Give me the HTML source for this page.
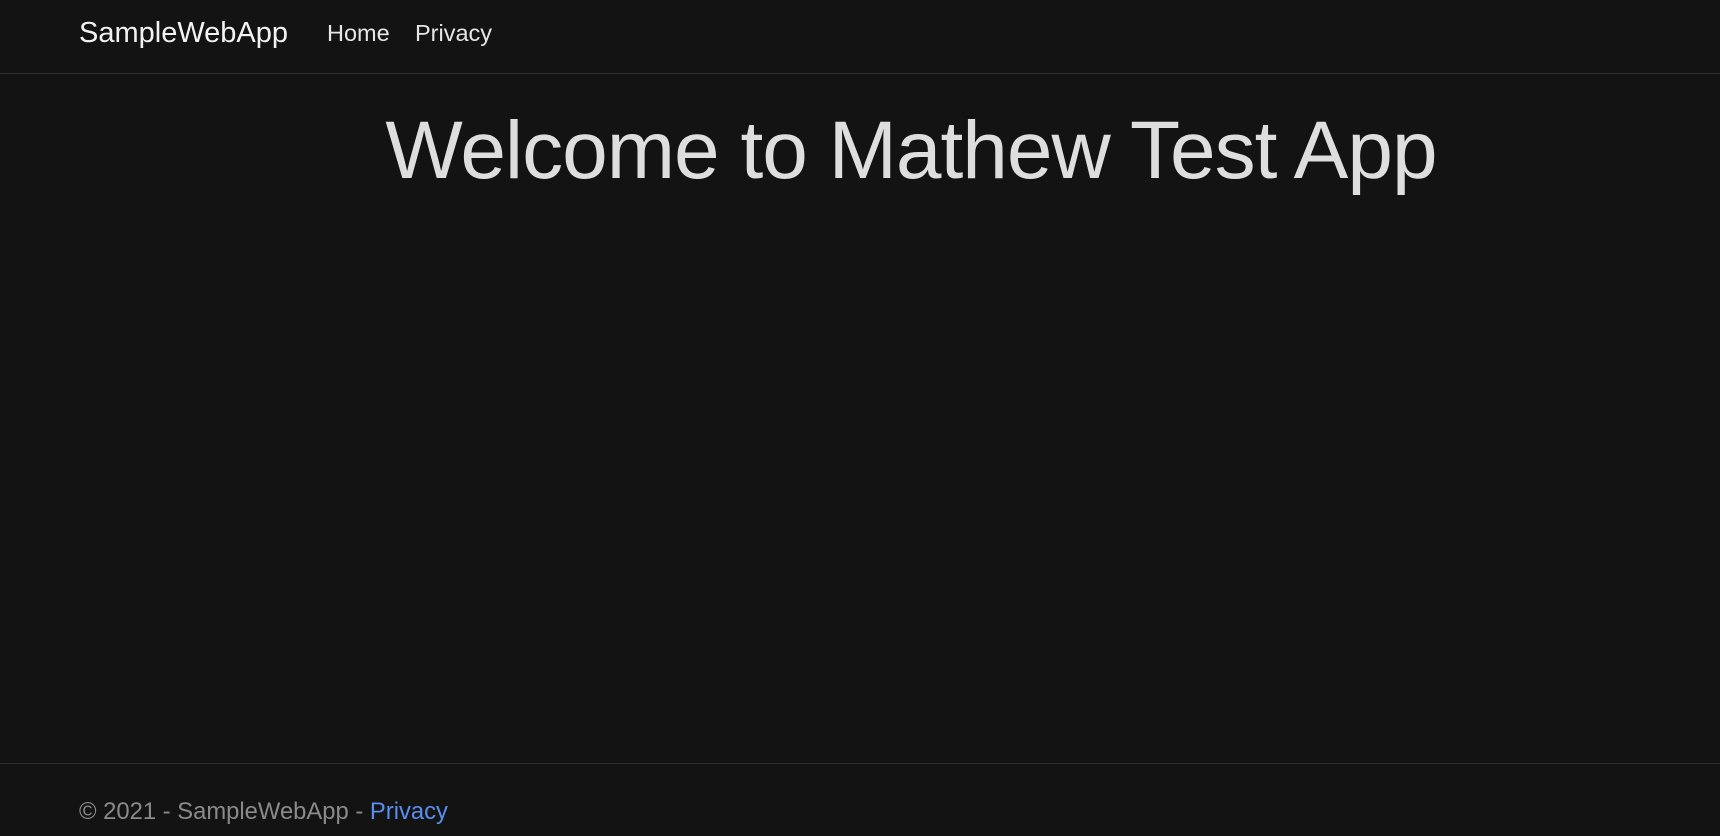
<!DOCTYPE html>
<html><head><meta charset="utf-8"><style>
html,body{margin:0;padding:0;background:#131313;width:1720px;height:835px;overflow:hidden;font-family:"Liberation Sans",sans-serif;}
.nav{position:absolute;left:0;top:0;width:1720px;height:73px;border-bottom:1px solid #2e2e2e;}
.brand{position:absolute;left:79px;top:17px;font-size:29px;color:#f2f2f2;}
.link{position:absolute;top:20px;font-size:23.5px;color:#e6e6e6;}
h1{position:absolute;left:311px;width:1200px;top:104px;margin:0;text-align:center;font-weight:300;font-size:82px;color:#dedede;letter-spacing:-1px;}
.foot{position:absolute;left:0;top:763px;width:1720px;border-top:1px solid #2e2e2e;height:72px;}
.ft{position:absolute;left:79px;top:34px;font-size:23.8px;color:#8a8a8a;}
.ft a{color:#5a8dee;text-decoration:none;}
</style></head><body>
<div class="nav"><span class="brand">SampleWebApp</span><span class="link" style="left:327px">Home</span><span class="link" style="left:415px">Privacy</span></div>
<h1>Welcome to Mathew Test App</h1>
<div class="foot"><div class="ft">© 2021 - SampleWebApp - <a>Privacy</a></div></div>
</body></html>
